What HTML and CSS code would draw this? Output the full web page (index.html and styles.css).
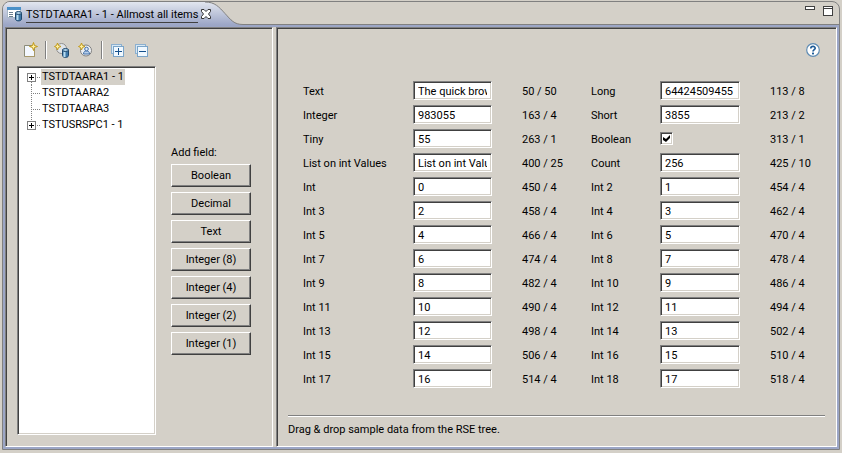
FILE: index.html
```html
<!DOCTYPE html>
<html lang="en">
<head>
<meta charset="utf-8">
<title>TSTDTAARA1 - 1 - Allmost all items</title>
<link rel="stylesheet" href="styles.css">
</head>
<body>
<div class="frame">
  <header class="header">
    <div class="tab">
      <svg class="tab-icon" width="16" height="16" viewBox="0 0 16 16" aria-hidden="true">
        <rect x="0.5" y="1.5" width="13" height="10" fill="#fff" stroke="#a8b8c8"/>
        <rect x="0" y="1" width="14" height="3" fill="#4a90c8"/>
        <path d="M2 6.5h4M2 8.5h4M2 10.5h4" stroke="#6a7f90"/>
        <path d="M8.5 7v6c0 2.500 6 2.500 6 0V7z" fill="#3f78a8" stroke="#1c466c"/>
        <path d="M10.5 8v6" stroke="#b8dcf0" stroke-width="2"/>
        <ellipse cx="11.5" cy="7" rx="3" ry="1.5" fill="#a8cce4" stroke="#1c466c"/>
      </svg>
      <a class="tab-title" href="#">TSTDTAARA1 - 1 - Allmost all items</a>
      <button class="tab-close" type="button" aria-label="Close">
        <svg width="12" height="12" viewBox="0 0 12 12"><path d="M1.5 1.5h2.5L6 3.5 8 1.5h2.5v2L8.5 6l2 2.5v2H8L6 8.5 4 10.5H1.5v-2L3.5 6l-2-2.5z" fill="#fff" stroke="#333"/></svg>
      </button>
    </div>
    <svg class="swoop" width="38" height="23" viewBox="0 0 38 23" aria-hidden="true">
      <defs><linearGradient id="tabfill" x1="0" y1="0" x2="0" y2="1"><stop offset="0" stop-color="#e2e6ef"/><stop offset="1" stop-color="#9ca6c6"/></linearGradient></defs>
      <path d="M0 0C10 0 14 5 20 11.5S29 22.5 38 22.5V23H0z" fill="url(#tabfill)"/>
      <path d="M0 0C10 0 14 5 20 11.5S29 22.5 38 22.5" fill="none" stroke="#808080"/>
    </svg>
    <div class="window-tools">
      <button type="button" aria-label="Minimize"><svg width="10" height="10" viewBox="0 0 10 10"><rect x="0.5" y="0.5" width="9" height="3" fill="#fff" stroke="#404040"/></svg></button>
      <button type="button" aria-label="Maximize"><svg width="10" height="10" viewBox="0 0 10 10"><rect x="0.5" y="0.5" width="9" height="9" fill="#fff" stroke="#404040"/><path d="M0 2.5h10" stroke="#404040"/></svg></button>
    </div>
  </header>
  <main class="panels">
    <section class="panel panel-left">
      <div class="toolbar">
        <button type="button" aria-label="New"><svg width="16" height="16" viewBox="0 0 16 16"><path d="M2.5 3.5h10v11h-10z" fill="#f4f8ff" stroke="#8c8c78"/><path d="M3 14.5h9.5V8" fill="none" stroke="#a89868"/><path d="M11.5 0.5l1 3 3 1-3 1-1 3-1-3-3-1 3-1z" fill="#fff0a0" stroke="#c09818"/></svg></button>
        <span class="divider"></span>
        <button type="button" aria-label="New data area"><svg width="16" height="16" viewBox="0 0 16 16"><circle cx="7.5" cy="6.5" r="5" fill="#e0e4e8" stroke="#909090"/><path d="M8.5 8v5.5c0 2.500 6 2.500 6 0V8z" fill="#3f78a8" stroke="#1c466c"/><path d="M10.5 9v6" stroke="#b8dcf0" stroke-width="2"/><ellipse cx="11.5" cy="8" rx="3" ry="1.5" fill="#a8cce4" stroke="#1c466c"/><path d="M3.5 1l1 2.500 2.500 1-2.500 1-1 2.500-1-2.500-2-1 2-1z" fill="#fff0a0" stroke="#c09818"/></svg></button>
        <button type="button" aria-label="New user space"><svg width="16" height="16" viewBox="0 0 16 16"><circle cx="8" cy="8.5" r="5.5" fill="#eceff2" stroke="#808080"/><path d="M5.5 12c0-2.500 1.500-3 3-3s3 0.500 3 3z" fill="#b8d0ec" stroke="#4470a8"/><circle cx="8.5" cy="7" r="1.8" fill="#dce8f8" stroke="#4470a8"/><path d="M3.5 1l1 2.500 2.500 1-2.500 1-1 2.500-1-2.500-2-1 2-1z" fill="#fff0a0" stroke="#c09818"/></svg></button>
        <span class="divider"></span>
        <button type="button" aria-label="Expand all"><svg width="16" height="16" viewBox="0 0 16 16"><rect x="1.5" y="2.500" width="10" height="9" fill="#d8e8f4" stroke="#8cb0d0"/><rect x="3.5" y="4.5" width="10" height="10" fill="#f0f8ff" stroke="#7aa4c8"/><path d="M5 9.5h7M8.5 6v7" stroke="#14508c"/></svg></button>
        <button type="button" aria-label="Collapse all"><svg width="16" height="16" viewBox="0 0 16 16"><rect x="1.5" y="2.500" width="10" height="9" fill="#d8e8f4" stroke="#8cb0d0"/><rect x="3.5" y="4.5" width="10" height="10" fill="#f0f8ff" stroke="#7aa4c8"/><path d="M5 9.5h7" stroke="#14508c"/></svg></button>
      </div>
      <div class="left-body">
        <ul class="tree">
          <li><svg width="18" height="16" viewBox="0 0 18 16" aria-hidden="true"><path d="M8.5 13v3M14 8.500h4" stroke="#808080" stroke-dasharray="1 1"/><rect x="4.5" y="4.5" width="8" height="8" fill="#fff" stroke="#808080"/><path d="M6 8.5h5M8.5 6v5" stroke="#000"/></svg><span class="selected">TSTDTAARA1 - 1</span></li>
          <li><svg width="18" height="16" viewBox="0 0 18 16" aria-hidden="true"><path d="M8.5 0v16M10 8.5h8" stroke="#808080" stroke-dasharray="1 1"/></svg><span>TSTDTAARA2</span></li>
          <li><svg width="18" height="16" viewBox="0 0 18 16" aria-hidden="true"><path d="M8.5 0v16M10 8.5h8" stroke="#808080" stroke-dasharray="1 1"/></svg><span>TSTDTAARA3</span></li>
          <li><svg width="18" height="16" viewBox="0 0 18 16" aria-hidden="true"><path d="M8.5 0v4M14 8.5h4" stroke="#808080" stroke-dasharray="1 1"/><rect x="4.5" y="4.5" width="8" height="8" fill="#fff" stroke="#808080"/><path d="M6 8.5h5M8.5 6v5" stroke="#000"/></svg><span>TSTUSRSPC1 - 1</span></li>
        </ul>
        <div class="add-fields">
          <p>Add field:</p>
          <button type="button">Boolean</button>
          <button type="button">Decimal</button>
          <button type="button">Text</button>
          <button type="button">Integer (8)</button>
          <button type="button">Integer (4)</button>
          <button type="button">Integer (2)</button>
          <button type="button">Integer (1)</button>
        </div>
      </div>
    </section>
    <section class="panel panel-right">
      <div class="help-row">
        <button type="button" aria-label="Help"><svg width="14" height="14" viewBox="0 0 14 14"><circle cx="7" cy="7" r="6.3" fill="#fff" stroke="#5f8cb4" stroke-width="1.2"/><path d="M4.8 5.6C4.8 2.7 9.2 2.8 9.2 5.2 9.2 6.7 7 6.7 7 8.6" fill="none" stroke="#1f5c98" stroke-width="1.7"/><rect x="6" y="9.6" width="2" height="1.8" fill="#1f5c98"/></svg></button>
      </div>
      <form class="fields">
        <label for="f1">Text</label><input id="f1" type="text" value="The quick brown fox"><span>50 / 50</span>
        <label for="f2">Long</label><input id="f2" type="text" value="64424509455"><span>113 / 8</span>
        <label for="f3">Integer</label><input id="f3" type="text" value="983055"><span>163 / 4</span>
        <label for="f4">Short</label><input id="f4" type="text" value="3855"><span>213 / 2</span>
        <label for="f5">Tiny</label><input id="f5" type="text" value="55"><span>263 / 1</span>
        <label for="f6">Boolean</label><input id="f6" type="checkbox" checked><span>313 / 1</span>
        <label for="f7">List on int Values</label><input id="f7" type="text" value="List on int Values"><span>400 / 25</span>
        <label for="f8">Count</label><input id="f8" type="text" value="256"><span>425 / 10</span>
        <label for="f9">Int</label><input id="f9" type="text" value="0"><span>450 / 4</span>
        <label for="f10">Int 2</label><input id="f10" type="text" value="1"><span>454 / 4</span>
        <label for="f11">Int 3</label><input id="f11" type="text" value="2"><span>458 / 4</span>
        <label for="f12">Int 4</label><input id="f12" type="text" value="3"><span>462 / 4</span>
        <label for="f13">Int 5</label><input id="f13" type="text" value="4"><span>466 / 4</span>
        <label for="f14">Int 6</label><input id="f14" type="text" value="5"><span>470 / 4</span>
        <label for="f15">Int 7</label><input id="f15" type="text" value="6"><span>474 / 4</span>
        <label for="f16">Int 8</label><input id="f16" type="text" value="7"><span>478 / 4</span>
        <label for="f17">Int 9</label><input id="f17" type="text" value="8"><span>482 / 4</span>
        <label for="f18">Int 10</label><input id="f18" type="text" value="9"><span>486 / 4</span>
        <label for="f19">Int 11</label><input id="f19" type="text" value="10"><span>490 / 4</span>
        <label for="f20">Int 12</label><input id="f20" type="text" value="11"><span>494 / 4</span>
        <label for="f21">Int 13</label><input id="f21" type="text" value="12"><span>498 / 4</span>
        <label for="f22">Int 14</label><input id="f22" type="text" value="13"><span>502 / 4</span>
        <label for="f23">Int 15</label><input id="f23" type="text" value="14"><span>506 / 4</span>
        <label for="f24">Int 16</label><input id="f24" type="text" value="15"><span>510 / 4</span>
        <label for="f25">Int 17</label><input id="f25" type="text" value="16"><span>514 / 4</span>
        <label for="f26">Int 18</label><input id="f26" type="text" value="17"><span>518 / 4</span>
      </form>
      <footer class="hint">Drag &amp; drop sample data from the RSE tree.</footer>
    </section>
  </main>
</div>
</body>
</html>
```
FILE: styles.css
```css
* { box-sizing: border-box; }
body {
  margin: 0;
  padding: 1px 2px 3px;
  min-height: 100vh;
  display: flex;
  background: #d4d0c8;
  color: #000;
  font: 11px/14px Roboto, "Liberation Sans", sans-serif;
}
button, input { font: inherit; color: inherit; margin: 0; }
button { padding: 0; border: 0; background: none; }
svg { display: block; }

.frame {
  flex: 1;
  display: flex;
  flex-direction: column;
  border: 1px solid #808080;
  border-radius: 8px 8px 0 0;
  background: #d4d0c8;
  overflow: hidden;
}
.header { display: flex; height: 23px; }
.tab {
  display: flex;
  align-items: center;
  width: 202px;
  padding-left: 4px;
  background: linear-gradient(#e2e6ef, #9ca6c6);
  z-index: 1;
}
.tab-icon, .tab-close, .tab-title { flex: none; }
.tab-title {
  margin: 0 2px 0 3px;
  padding-top: 2px;
  line-height: 15px;
  color: #000;
  text-decoration: none;
  border-bottom: 1px solid #404040;
}
.swoop { flex: none; }
.window-tools {
  flex: 1;
  display: flex;
  justify-content: flex-end;
  align-items: flex-start;
  gap: 8px;
  padding: 4px 6px 0 0;
  border-bottom: 1px solid #808080;
}

.panels {
  flex: 1;
  display: flex;
  gap: 3px;
  padding: 2px;
  background: linear-gradient(#d4d0c8, #d4d0c8) content-box, #9ca6c6;
}
.panel {
  display: flex;
  flex-direction: column;
  border: 1px solid;
  border-color: #808080 #fff #fff #808080;
  box-shadow: inset 1px 1px #404040;
}
.panel-left { width: 268px; flex: none; padding: 1px 21px 11px 11px; }
.panel-right { flex: 1; padding: 1px 11px 9px; }

.toolbar {
  display: flex;
  align-items: center;
  gap: 8px;
  height: 37px;
  padding: 5px 5px 0;
}
.divider { width: 2px; height: 18px; margin: 0 -1px; background: #808080; border-right: 1px solid #fff; }
.left-body { flex: 1; display: flex; gap: 15px; }
.tree {
  flex: 1;
  margin: 0;
  padding: 2px 0 0 5px;
  list-style: none;
  background: #fff;
  border: 1px solid;
  border-color: #808080 #fff #fff #808080;
  box-shadow: inset 1px 1px #404040, inset -1px -1px #d4d0c8;
}
.tree li { display: flex; line-height: 16px; }
.tree li span { padding: 0 1px; }
.tree .selected { background: #d4d0c8; }

.add-fields { width: 80px; display: flex; flex-direction: column; gap: 5px; padding-top: 81px; }
.add-fields p { margin: 0; line-height: 12px; }
.add-fields button {
  height: 23px;
  border: 1px solid;
  border-color: #fff #404040 #404040 #fff;
  box-shadow: inset -1px -1px #808080;
  background: #d4d0c8;
}

.help-row { display: flex; justify-content: flex-end; height: 52px; padding: 14px 5px 0; }
.help-row button { height: 14px; }
.fields {
  display: grid;
  grid-template-columns: 80px 79px 39px 39px 80px 1fr;
  gap: 5px 30px;
  margin-left: 15px;
  white-space: nowrap;
}
.fields label, .fields span { height: 19px; line-height: 21px; }
.fields input {
  appearance: none;
  width: 100%;
  height: 19px;
  border: 1px solid;
  border-color: #808080 #fff #fff #808080;
  border-radius: 0;
  background: #fff;
  box-shadow: inset 1px 1px #404040, inset -1px -1px #d4d0c8;
}
.fields input[type="text"] { padding: 1px 4px 0; }
.fields input[type="checkbox"] {
  align-self: center;
  width: 13px;
  height: 13px;
  padding: 2px;
}
.fields input[type="checkbox"]:checked::before {
  content: "";
  display: block;
  width: 7px;
  height: 7px;
  background: #000;
  clip-path: polygon(0 2px, 3px 4px, 7px 0, 7px 3px, 3px 7px, 0 5px);
}
.hint {
  margin-top: auto;
  padding-top: 7px;
  border-top: 1px solid #808080;
  box-shadow: inset 0 1px #fff;
}
```
